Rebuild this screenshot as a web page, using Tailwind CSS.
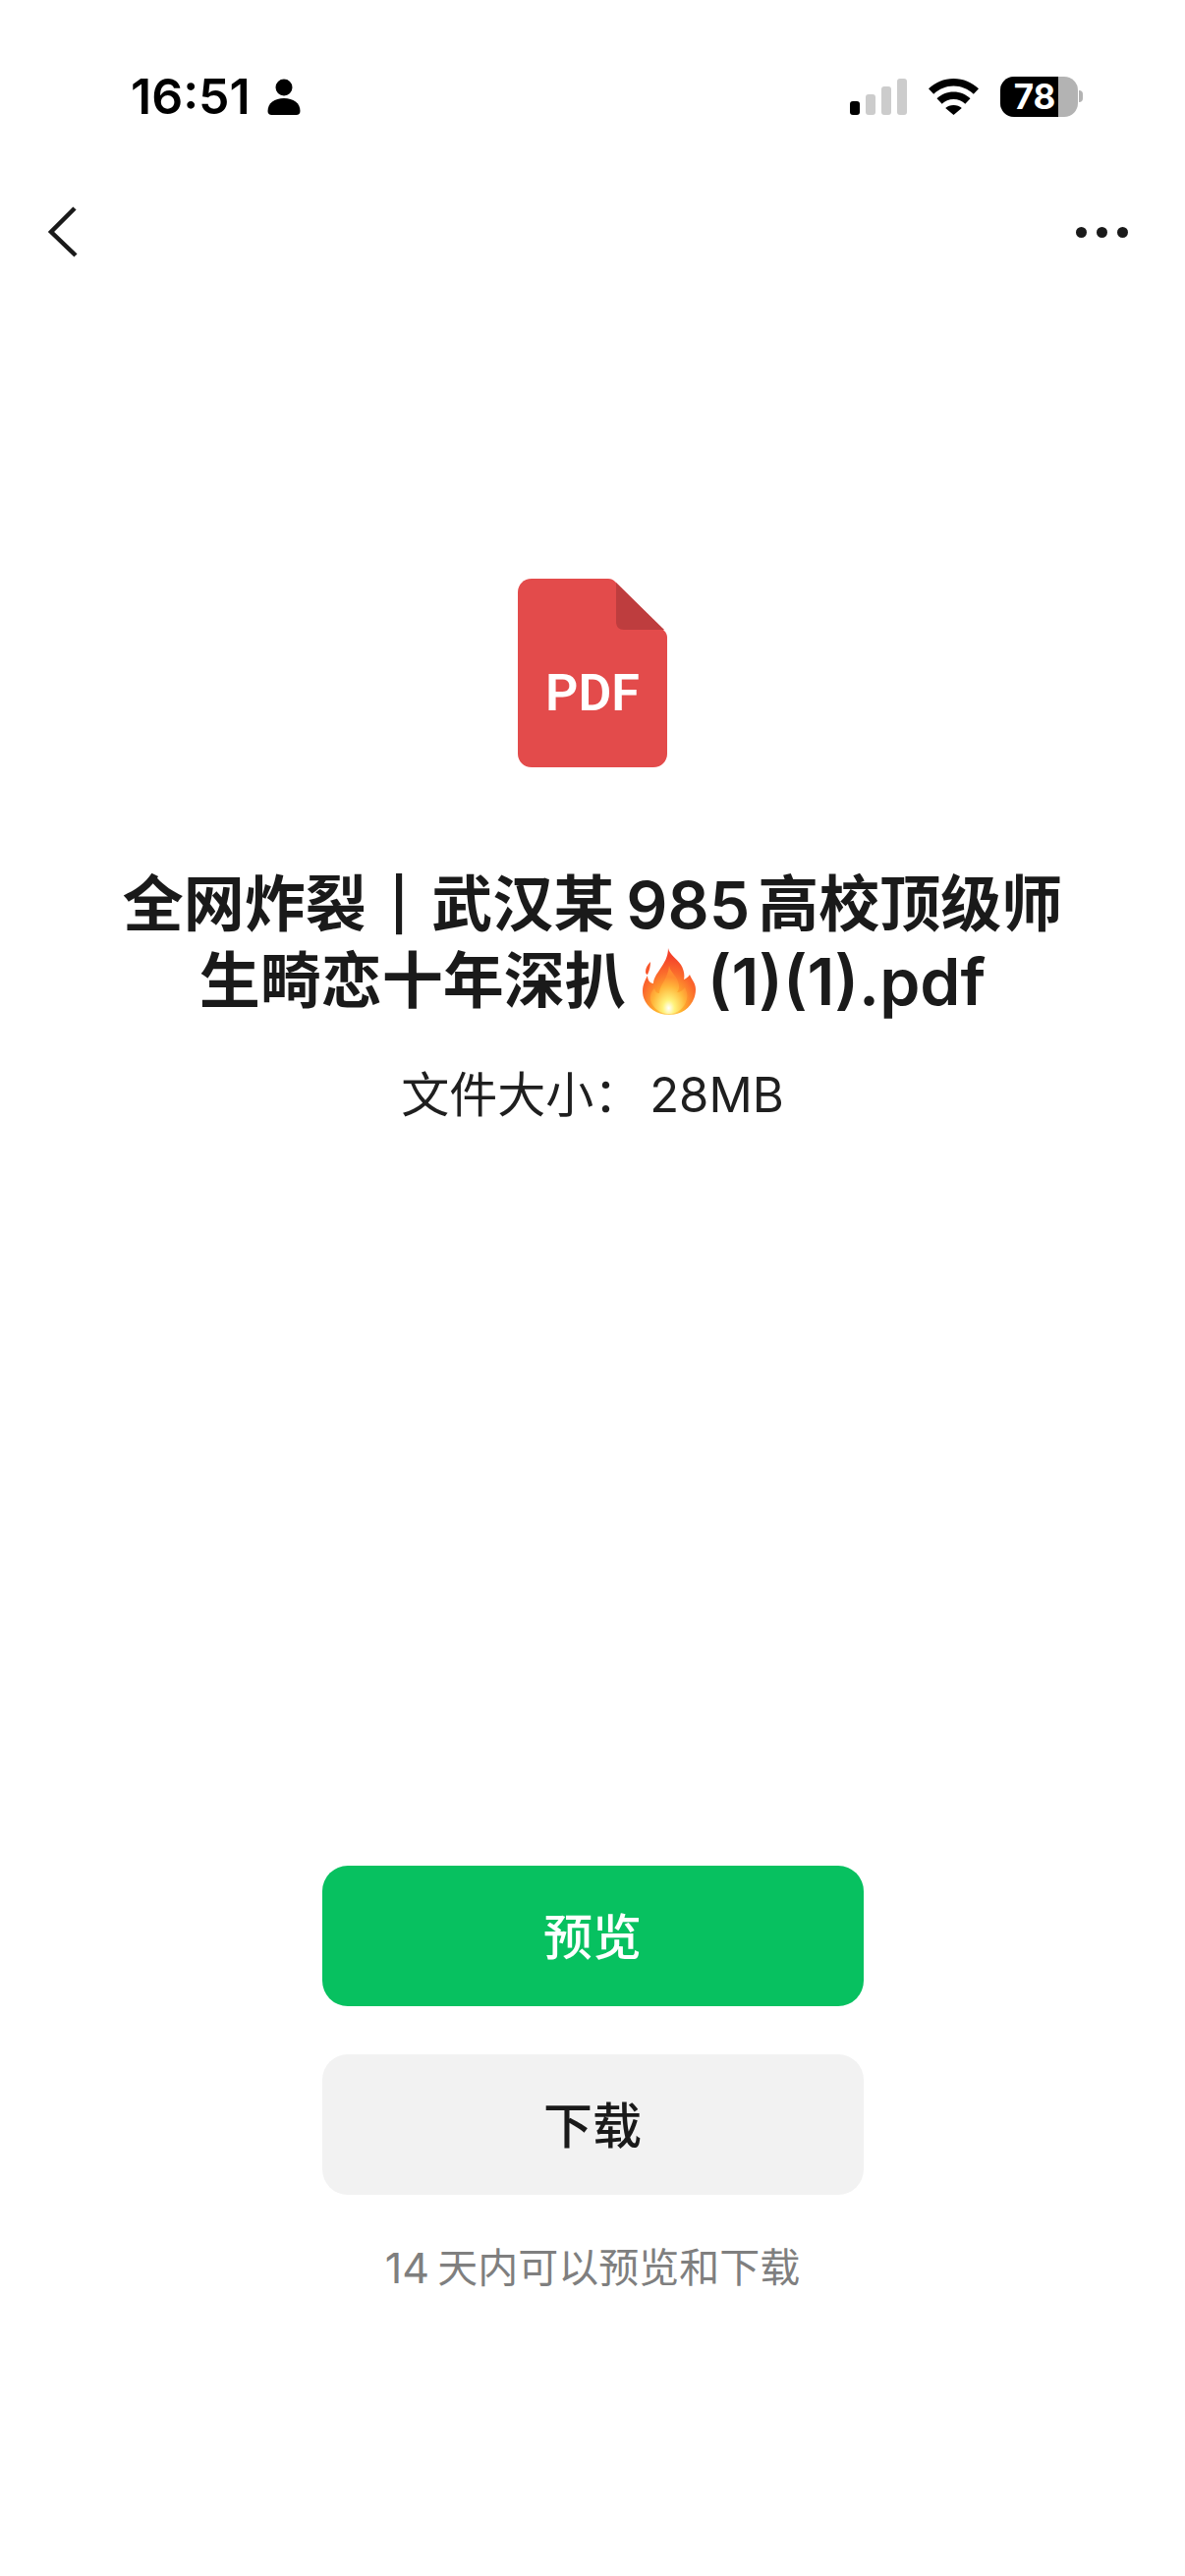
<!DOCTYPE html>
<html lang="zh-CN">
<head>
<meta charset="utf-8">
<script src="https://cdn.jsdelivr.net/npm/@tailwindcss/browser@4"></script>
</head>
<body class="bg-white">
<div class="w-[1206px] h-[2622px] flex flex-col items-center bg-white text-[#1a1a1a] font-['Inter','Noto_Sans_CJK_SC',sans-serif] overflow-hidden">
  <div class="w-full h-[72px] mt-[62px] flex items-center pl-[133px] pr-[104px] text-black">
    <span class="text-[50px] leading-none font-semibold">16:51</span>
    <svg class="ml-[17px] w-[34px] h-[37px]" viewBox="0 0 34 37" fill="#000"><circle cx="17" cy="9" r="8.5"/><path d="M0.5 33c0-8 7-13 16.500-13s16.500 5 16.500 13c0 2.500-1.500 4-4 4H4.500c-2.500 0-4-1.500-4-4z"/></svg>
    <div class="ml-auto flex items-center">
      <div class="flex items-end gap-[6px] h-[37px]">
        <div class="w-[10px] h-[14px] rounded-[3px] bg-black"></div>
        <div class="w-[10px] h-[21px] rounded-[3px] bg-[#cccccc]"></div>
        <div class="w-[10px] h-[29px] rounded-[3px] bg-[#cccccc]"></div>
        <div class="w-[10px] h-[37px] rounded-[3px] bg-[#cccccc]"></div>
      </div>
      <svg class="ml-[22px] w-[51px] h-[37px]" viewBox="0 0 51 37" fill="#000"><path d="M25.500 0C15.500 0 7 3.800 0 10.300l5.200 5.500C11 10.600 17.800 7.600 25.500 7.600s14.500 3 20.300 8.200l5.200-5.500C44 3.800 35.500 0 25.500 0z"/><path d="M25.500 13.500c-6.700 0-12.500 2.500-17 6.800l5.200 5.500c3-2.900 7.200-4.700 11.800-4.700s8.800 1.800 11.800 4.700l5.200-5.500c-4.500-4.300-10.300-6.800-17-6.800z"/><path d="M25.500 27c-3.300 0-6.200 1.200-8.300 3.100l8.300 6.900 8.300-6.900C31.700 28.200 28.800 27 25.500 27z"/></svg>
      <div class="ml-[22px] relative w-[79px] h-[41px] rounded-[14px] bg-[#b3b3b3] overflow-hidden">
        <div class="w-[59px] h-full bg-black"></div>
        <span class="absolute left-0 top-0 w-[70px] h-full flex items-center justify-center text-white text-[35px] font-bold leading-none">78</span>
      </div>
      <div class="w-[4px] h-[12px] ml-[1px] rounded-r-[4px] bg-[#b3b3b3]"></div>
    </div>
  </div>
  <div class="w-full h-[60px] mt-[72px] flex items-center justify-between pl-[46px] pr-[58px]">
    <svg class="w-[34px] h-[52px]" viewBox="0 0 34 52" fill="none" stroke="#1a1a1a" stroke-width="4.500"><path d="M30 2 L6 26 L31 50"/></svg>
    <div class="flex gap-[10px]">
      <div class="w-[11px] h-[11px] rounded-full bg-[#1a1a1a]"></div>
      <div class="w-[11px] h-[11px] rounded-full bg-[#1a1a1a]"></div>
      <div class="w-[11px] h-[11px] rounded-full bg-[#1a1a1a]"></div>
    </div>
  </div>
  <div class="relative mt-[323px] w-[152px] h-[192px] flex items-end justify-center">
    <svg class="absolute inset-0 w-[152px] h-[192px]" viewBox="0 0 152 192"><path d="M14 0H92c3 0 5 1 7 3l50 50c2 2 3 4 3 7v118c0 8-6 14-14 14H14c-8 0-14-6-14-14V14C0 6 6 0 14 0z" fill="#e34b4b"/><path d="M100 4 L149 52 L108 52 c-5 0-8-3-8-8z" fill="#be3d3e"/></svg>
    <span class="relative mb-[49px] text-white text-[52px] leading-none font-semibold font-['Roboto','Inter',sans-serif]">PDF</span>
  </div>
  <h1 class="mt-[101px] w-[1100px] text-center text-[62px] leading-[78px] font-semibold">
    <span class="flex items-center justify-center">全网炸裂<span class="mx-[24px] text-[52px]">|</span>武汉某<span class="ml-[12px] mr-[8px] text-[66px]">985</span>高校顶级师</span>
    <span class="flex items-center justify-center">生畸恋十年深扒<svg class="ml-[16px] mr-[11px] w-[56px] h-[68px]" viewBox="0 0 56 68">
      <defs>
        <radialGradient id="fl" cx="50%" cy="88%" r="75%"><stop offset="0" stop-color="#fff7b0"/><stop offset=".3" stop-color="#ffb52e"/><stop offset=".7" stop-color="#fb6a2c"/><stop offset="1" stop-color="#f4432a"/></radialGradient>
        <radialGradient id="fi" cx="50%" cy="88%" r="65%"><stop offset="0" stop-color="#ffffff"/><stop offset=".25" stop-color="#fff27a"/><stop offset=".7" stop-color="#ffb53a"/><stop offset="1" stop-color="#ff8a30"/></radialGradient>
      </defs>
      <path d="M27 0c1 6 8 10 13 17 3 5 4 10 3 15 2-1 4-2 6-5 1 4 6 8 6 15 0 14-11 26-27 26C13 68 1 57 1 44c0-7 3-12 5-16 0 4 2 8 6 8 0-5 3-9 7-15 4-6 8-12 8-21z" fill="url(#fl)"/>
      <path d="M28 18c1 6 7 10 9 16 2 5 1 9-1 11 3 0 6-2 8-5 2 4 3 8 2 12-2 9-10 15-18 15-9 0-17-6-19-14-1-5 1-9 4-12 1 3 2 5 5 5 0-8 9-15 10-28z" fill="url(#fi)"/>
      <path d="M4 24c0-4 2-7 5-10 0 4-1 9-3 13-1 0-2-1-2-3z" fill="#f8552a"/>
    </svg><span class="text-[66px]">(1)(1).pdf</span></span>
  </h1>
  <p class="mt-[47px] text-[49px] leading-[60px] text-[#1f1f1f] flex items-center">文件大小：<span class="ml-[8px]">28MB</span></p>
  <button class="mt-[754px] pt-[3px] w-[551px] h-[143px] rounded-[26px] bg-[#07c160] text-white text-[50px] font-medium flex items-center justify-center">预览</button>
  <button class="mt-[49px] pt-[3px] w-[551px] h-[143px] rounded-[26px] bg-[#f2f2f2] text-[#1a1a1a] text-[50px] font-medium flex items-center justify-center">下载</button>
  <p class="mt-[50px] text-[41px] leading-[48px] text-[#7f7f7f] flex items-center"><span class="text-[43px]">14</span><span class="ml-[8px]">天内可以预览和下载</span></p>
</div>
</body>
</html>
